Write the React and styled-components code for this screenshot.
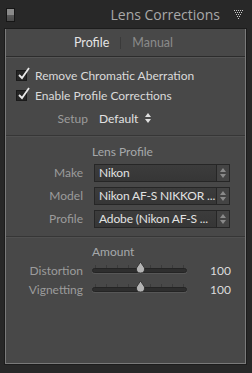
import React from 'react';
import styled, { createGlobalStyle } from 'styled-components';

const Global = createGlobalStyle`
  body { margin: 0; background: #282828; }
  * { box-sizing: border-box; }
`;

const Frame = styled.div`
  width: 252px;
  height: 373px;
  background: #282828;
  font-family: Lato, "Open Sans", sans-serif;
  display: flex;
  flex-direction: column;
  overflow: hidden;
`;

const Header = styled.div`
  height: 29px;
  display: flex;
  align-items: center;
  padding: 0 9px 0 6px;
`;

const Switch = styled.div`
  width: 9px;
  height: 14px;
  border: 1px solid #161616;
  background: linear-gradient(#8a8a8a 0%, #8a8a8a 50%, #5a5a5a 50%, #4a4a4a 100%);
  margin-top: 1px;
`;

const Title = styled.div`
  margin-left: auto;
  font-family: "Open Sans", sans-serif;
  font-size: 14px;
  color: #a9a9a9;
  margin-right: 14px;
`;

const Panel = styled.div`
  margin: 0 6px 0 5px;
  height: 335px;
  background: #484848;
  border: 1px solid #7a7a7a;
  border-top: none;
  box-shadow: 0 0 0 1px #1c1c1c;
  display: flex;
  flex-direction: column;
`;

const Tabs = styled.div`
  height: 28px;
  display: flex;
  justify-content: center;
  align-items: center;
  gap: 11px;
  border-bottom: 1px solid #2c2c2c;
  box-shadow: 0 1px 0 #555;
  font-size: 12.5px;
  padding-right: 4px;
`;

const Tab = styled.span`
  color: ${p => (p.active ? '#e4e4e4' : '#8b8b8b')};
`;

const TabSep = styled.span`
  width: 1px;
  height: 12px;
  background: #3a3a3a;
`;

const Section = styled.div`
  padding: ${p => p.pad};
  border-bottom: ${p => (p.last ? 'none' : '1px solid #363636')};
  box-shadow: ${p => (p.last ? 'none' : '0 1px 0 #505050')};
  display: flex;
  flex-direction: column;
`;

const CheckRow = styled.label`
  display: flex;
  align-items: center;
  gap: 8px;
  padding-left: 10px;
  height: 20px;
  font-size: 12px;
  color: #dadada;
`;

const Box = styled.span`
  position: relative;
  width: 11px;
  height: 11px;
  background: #262626;
  border: 1px solid #1a1a1a;
  svg { position: absolute; left: 0px; top: -5px; }
`;

const Check = () => (
  <Box>
    <svg width="14" height="14" viewBox="0 0 14 14">
      <path d="M2 9 L5 12 L12 2" fill="none" stroke="#e8e8e8" strokeWidth="1.8" />
    </svg>
  </Box>
);

const SetupRow = styled.div`
  display: flex;
  align-items: center;
  height: 22px;
  margin-top: 2px;
  font-size: 12px;
`;

const Label = styled.span`
  width: ${p => p.w || '77px'};
  text-align: right;
  color: #9c9c9c;
  flex-shrink: 0;
`;

const Value = styled.span`
  color: #e2e2e2;
  margin-left: 11px;
  display: flex;
  align-items: center;
  gap: 7px;
`;

const UpDown = ({ color = '#e0e0e0' }) => (
  <svg width="6" height="10" viewBox="0 0 6 10">
    <path d="M3 0 L6 4 H0 Z M0 6 H6 L3 10 Z" fill={color} />
  </svg>
);

const Heading = styled.div`
  font-size: 12px;
  color: #a6a8ab;
  padding-left: 86px;
  height: 18px;
  line-height: 18px;
`;

const FieldRow = styled.div`
  display: flex;
  align-items: center;
  height: 23px;
  font-size: 12px;
`;

const Select = styled.div`
  margin-left: 11px;
  width: 136px;
  height: 18px;
  border: 1px solid #262626;
  background: linear-gradient(#3c3c3c, #363636);
  display: flex;
  align-items: center;
  color: #e2e2e2;
`;

const SelectText = styled.span`
  flex: 1;
  padding-left: 4px;
  letter-spacing: -0.15px;
  white-space: nowrap;
  overflow: hidden;
`;

const Stepper = styled.span`
  width: 13px;
  height: 16px;
  border-left: 1px solid #262626;
  background: #444;
  display: flex;
  align-items: center;
  justify-content: center;
  flex-shrink: 0;
`;

const SliderRow = styled.div`
  display: flex;
  align-items: center;
  height: 19px;
  font-size: 12px;
`;

const Track = styled.div`
  position: relative;
  margin-left: 9px;
  width: 95px;
  height: 5px;
  border-radius: 3px;
  background: #2e2e2e;
  border: 1px solid #242424;
  box-shadow: 0 1px 0 #575757;
`;

const Ticks = styled.div`
  position: absolute;
  left: 2px;
  right: 2px;
  top: -4px;
  display: flex;
  justify-content: space-between;
  span { width: 1px; height: 3px; background: #3a3a3a; }
`;

const Thumb = styled.svg`
  position: absolute;
  top: -7px;
  margin-left: -4px;
`;

const Num = styled.span`
  margin-left: auto;
  margin-right: 14px;
  color: #dcdcdc;
`;

const Slider = ({ pct }) => (
  <Track>
    <Ticks>{Array.from({ length: 9 }).map((_, i) => <span key={i} />)}</Ticks>
    <Thumb width="9" height="12" viewBox="0 0 9 12" style={{ left: `${pct}%` }}>
      <path d="M4.5 0 L8.5 6 Q9 11 4.5 11 Q0 11 0.5 6 Z" fill="#b4b4b4" stroke="#2a2a2a" strokeWidth="0.8" />
    </Thumb>
  </Track>
);

const FoldIcon = () => (
  <svg width="9" height="9" viewBox="0 0 9 9">
    {[[0,0],[2,0],[4,0],[6,0],[8,0],[1,2],[3,2],[5,2],[7,2],[2,4],[4,4],[6,4],[3,6],[5,6],[4,8]].map(([x, y], i) => (
      <rect key={i} x={x} y={y} width="1" height="1" fill="#c8c8c8" />
    ))}
  </svg>
);

export default function App() {
  return (
    <Frame>
      <Global />
      <Header>
        <Switch />
        <Title>Lens Corrections</Title>
        <FoldIcon />
      </Header>
      <Panel>
        <Tabs>
          <Tab active>Profile</Tab>
          <TabSep />
          <Tab>Manual</Tab>
        </Tabs>
        <Section pad="8px 0 6px">
          <CheckRow><Check />Remove Chromatic Aberration</CheckRow>
          <CheckRow><Check />Enable Profile Corrections</CheckRow>
          <SetupRow>
            <Label w="82px">Setup</Label>
            <Value>Default <UpDown /></Value>
          </SetupRow>
        </Section>
        <Section pad="7px 0 6px">
          <Heading>Lens Profile</Heading>
          <FieldRow><Label>Make</Label><Select><SelectText>Nikon</SelectText><Stepper><UpDown color="#8a8a8a" /></Stepper></Select></FieldRow>
          <FieldRow><Label>Model</Label><Select><SelectText>Nikon AF-S NIKKOR ...</SelectText><Stepper><UpDown color="#8a8a8a" /></Stepper></Select></FieldRow>
          <FieldRow><Label>Profile</Label><Select><SelectText>Adobe (Nikon AF-S ...</SelectText><Stepper><UpDown color="#8a8a8a" /></Stepper></Select></FieldRow>
        </Section>
        <Section pad="6px 0 0" last>
          <Heading>Amount</Heading>
          <SliderRow><Label>Distortion</Label><Slider pct={50} /><Num>100</Num></SliderRow>
          <SliderRow><Label>Vignetting</Label><Slider pct={50} /><Num>100</Num></SliderRow>
        </Section>
      </Panel>
    </Frame>
  );
}
